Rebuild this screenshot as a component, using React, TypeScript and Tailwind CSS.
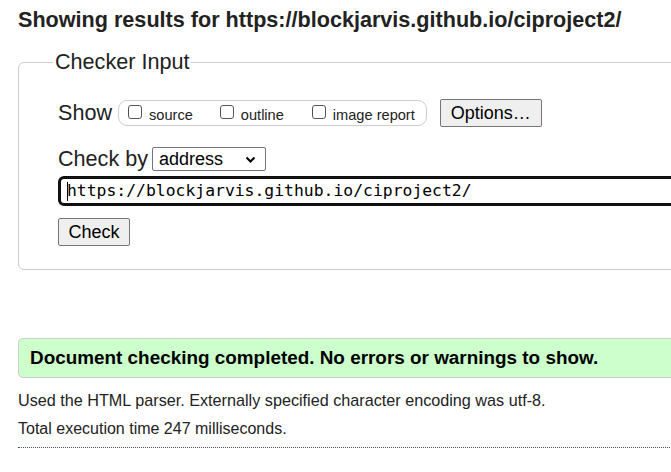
import React from "react";

function Box() {
  return (
    <span className="block h-[14px] w-[14px] shrink-0 rounded-[3px] border border-[#555] bg-white" />
  );
}

export default function App() {
  return (
    <div
      className="w-[671px] h-[472px] overflow-hidden bg-white text-black"
      style={{ fontFamily: '"Liberation Sans", Arial, sans-serif' }}
    >
      <div className="w-[760px] pl-[18px]">
        <h2 className="pt-[7px] text-[21.6px] leading-[26px] font-bold text-[#222]">
          Showing results for https://blockjarvis.github.io/ciproject2/
        </h2>

        <fieldset className="mt-[17px] w-[742px] rounded-[6px] border border-[#cccccc] pb-[23px]">
          <legend className="ml-[34px] px-[2px] text-[21.6px] leading-[24px] text-[#222]">
            Checker Input
          </legend>

          <div className="pl-[39px]">
            <div className="mt-[25px] flex h-[28px] items-center">
              <span className="text-[21.6px] leading-[24px] text-[#222]">Show</span>
              <div className="ml-[6px] flex h-[26px] items-center rounded-[9px] border border-[#cccccc] pl-[9px] pr-[11px] text-[14.6px] leading-[18px] text-[#222]">
                <label className="flex items-center">
                  <span className="-mt-[3px]"><Box /></span>
                  <span className="ml-[7px] mt-[4px]">source</span>
                </label>
                <label className="ml-[27px] flex items-center">
                  <span className="-mt-[3px]"><Box /></span>
                  <span className="ml-[7px] mt-[4px]">outline</span>
                </label>
                <label className="ml-[28px] flex items-center">
                  <span className="-mt-[3px]"><Box /></span>
                  <span className="ml-[7px] mt-[4px]">image report</span>
                </label>
              </div>
              <button className="ml-[13px] h-[28px] w-[102px] rounded-[2px] border border-[#767676] bg-[#efefef] text-[18px] leading-[22px] text-black">
                Options…
              </button>
            </div>

            <div className="mt-[20px] flex h-[24px] items-center">
              <span className="text-[21.6px] leading-[24px] text-[#222]">Check by</span>
              <div className="relative ml-[4px] h-[24px] w-[114px] rounded-[2px] border border-[#767676] bg-white">
                <span className="absolute left-[6px] top-[0px] text-[18px] leading-[22px] text-black">
                  address
                </span>
                <svg
                  className="absolute right-[9px] top-[8px]"
                  width="11"
                  height="8"
                  viewBox="0 0 11 8"
                >
                  <path d="M1.5 1.5 L5.5 5.5 L9.5 1.5" stroke="#000" strokeWidth="2" fill="none" />
                </svg>
              </div>
            </div>

            <div className="mt-[5px] flex h-[30px] w-[700px] items-center rounded-[6px] border-[3px] border-[#101010] pl-[6px]">
              <span className="mr-[-1px] h-[19px] w-[1px] bg-black" />
              <span
                className="text-[16.4px] leading-[20px] text-black"
                style={{ fontFamily: '"DejaVu Sans Mono", "Liberation Mono", monospace' }}
              >
                https://blockjarvis.github.io/ciproject2/
              </span>
            </div>

            <button className="mt-[12px] block h-[28px] w-[72px] rounded-[2px] border border-[#767676] bg-[#efefef] text-[18px] leading-[22px] text-black">
              Check
            </button>
          </div>
        </fieldset>

        <div className="mt-[68px] flex h-[40px] w-[742px] items-center rounded-[5px] border border-[#cccccc] bg-[#ccffcc] pl-[11px]">
          <span className="text-[18.9px] font-bold text-black">
            Document checking completed. No errors or warnings to show.
          </span>
        </div>

        <p className="mt-[12px] text-[16.2px] leading-[20px] text-[#222]">
          Used the HTML parser. Externally specified character encoding was utf-8.
        </p>
        <p className="mt-[9px] text-[16px] leading-[20px] text-[#222]">
          Total execution time 247 milliseconds.
        </p>
        <div className="mt-[8px] w-[742px] border-t border-dotted border-[#555]" />
      </div>
    </div>
  );
}
